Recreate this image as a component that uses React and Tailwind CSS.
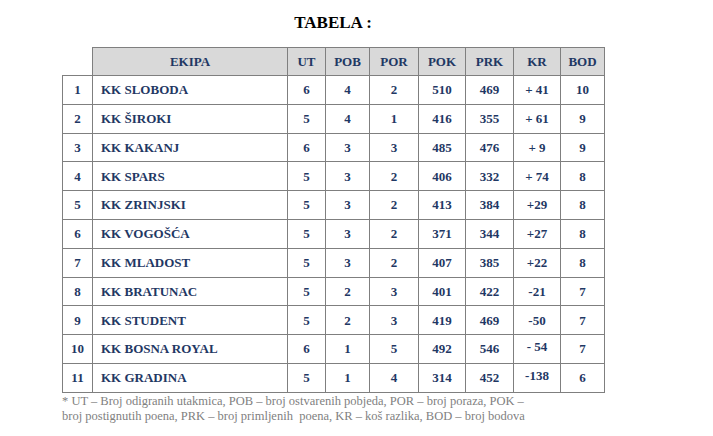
const rows = [
  [1, 'KK SLOBODA', 6, 4, 2, 510, 469, '+ 41', 10],
  [2, 'KK ŠIROKI', 5, 4, 1, 416, 355, '+ 61', 9],
  [3, 'KK KAKANJ', 6, 3, 3, 485, 476, '+ 9', 9],
  [4, 'KK SPARS', 5, 3, 2, 406, 332, '+ 74', 8],
  [5, 'KK ZRINJSKI', 5, 3, 2, 413, 384, '+29', 8],
  [6, 'KK VOGOŠĆA', 5, 3, 2, 371, 344, '+27', 8],
  [7, 'KK MLADOST', 5, 3, 2, 407, 385, '+22', 8],
  [8, 'KK BRATUNAC', 5, 2, 3, 401, 422, '-21', 7],
  [9, 'KK STUDENT', 5, 2, 3, 419, 469, '-50', 7],
  [10, 'KK BOSNA ROYAL', 6, 1, 5, 492, 546, '- 54', 7],
  [11, 'KK GRADINA', 5, 1, 4, 314, 452, '-138', 6],
]

const heads = ['UT', 'POB', 'POR', 'POK', 'PRK', 'KR', 'BOD']
const widths = ['w-[38px]', 'w-[44px]', 'w-[49px]', 'w-[47px]', 'w-[48px]', 'w-[47px]', 'w-[44px]']

// cells are serif too, set on the table itself so nothing falls back to sans
const serif = "font-['Liberation_Serif','Times_New_Roman',serif]"

export default function App() {
  return (
    <div className={`min-h-[436px] w-[713px] bg-white pl-[62px] pt-[12px] ${serif}`}>
      <div className="w-[542px]">
        <h1 className={`text-center text-[17px] font-bold leading-[22px] text-black ${serif}`}>TABELA :</h1>
        <table
          className={`mt-[13px] w-[542px] table-fixed border-collapse text-[13px] font-bold text-[#1f3864] ${serif}`}
        >
          <colgroup>
            <col className="w-[30px]" />
            <col className="w-[195px]" />
            {widths.map((w, i) => (
              <col key={i} className={w} />
            ))}
          </colgroup>
          <thead>
            <tr className="h-[28px]">
              <th className="border-0 p-0"></th>
              <th className={`border border-[#7f7f7f] bg-[#d9d9d9] p-0 text-center ${serif}`}>EKIPA</th>
              {heads.map((h) => (
                <th key={h} className={`border border-[#7f7f7f] bg-[#d9d9d9] p-0 text-center ${serif}`}>
                  {h}
                </th>
              ))}
            </tr>
          </thead>
          <tbody>
            {rows.map((r) => (
              <tr key={r[0]} className="h-[28.8px]">
                <td className={`border border-[#7f7f7f] p-0 text-center ${serif}`}>{r[0]}</td>
                <td className={`border border-[#7f7f7f] py-0 pl-[8px] text-left ${serif}`}>{r[1]}</td>
                {r.slice(2).map((v, i) => (
                  <td
                    key={i}
                    className={
                      i === 5 && (r[0] === 10 || r[0] === 11)
                        ? `border border-[#7f7f7f] p-0 pb-[5px] text-center ${serif}`
                        : `border border-[#7f7f7f] p-0 text-center ${serif}`
                    }
                  >
                    {v}
                  </td>
                ))}
              </tr>
            ))}
          </tbody>
        </table>
        <p className={`mt-[1px] text-[12.5px] leading-[15px] text-[#7f7f7f] ${serif}`}>
          * UT – Broj odigranih utakmica, POB – broj ostvarenih pobjeda, POR – broj poraza, POK –
          <br />
          broj postignutih poena, PRK – broj primljenih &nbsp;poena, KR – koš razlika, BOD – broj bodova
        </p>
      </div>
    </div>
  )
}
